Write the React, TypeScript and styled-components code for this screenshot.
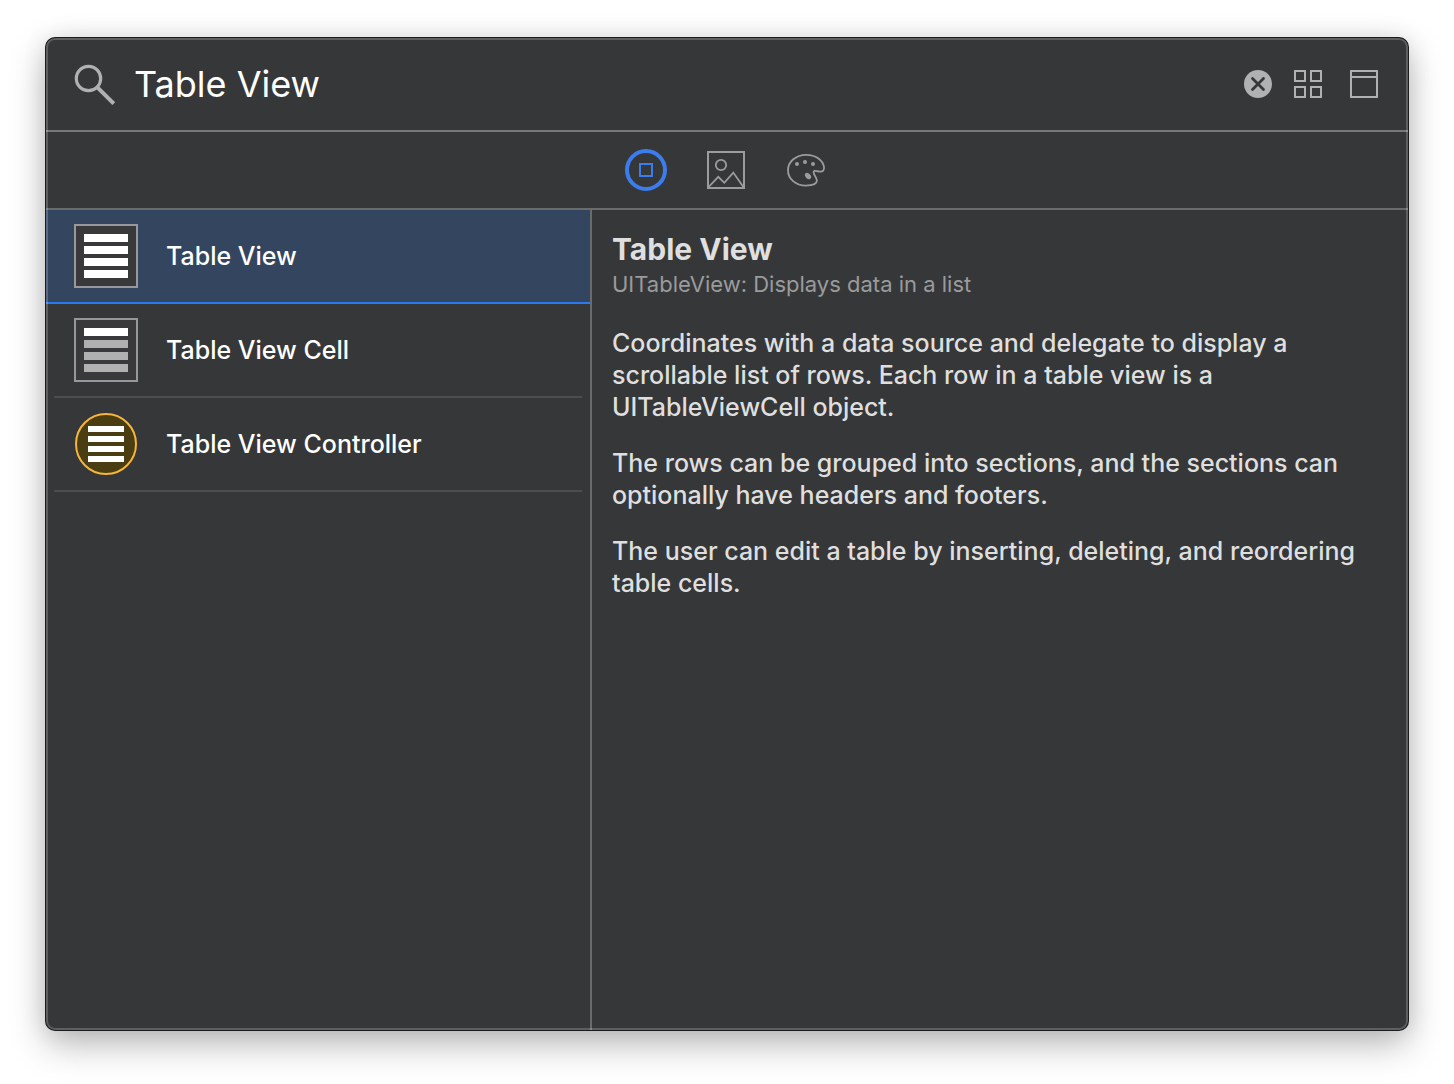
import { useState } from "react";
import styled, { createGlobalStyle } from "styled-components";

const GlobalStyle = createGlobalStyle`
  *, *::before, *::after { box-sizing: border-box; }
  body {
    margin: 0;
    background: #ffffff;
    font-family: Inter, "Liberation Sans", sans-serif;
    -webkit-font-smoothing: antialiased;
  }
  button, input {
    font: inherit;
    color: inherit;
    border: 0;
    margin: 0;
    padding: 0;
    background: none;
  }
  svg { display: block; }
`;

const Desktop = styled.div`
  display: flex;
  min-height: 100vh;
  padding: 38px 46px 54px;
`;

const Window = styled.main`
  position: relative;
  display: flex;
  flex: 1;
  flex-direction: column;
  min-width: 0;
  overflow: clip;
  border-radius: 9px;
  background: #363738;
  color: #ffffff;
  box-shadow:
    0 0 0 1px #1b1c1e,
    0 14px 36px rgba(0, 0, 0, 0.28),
    0 0 24px rgba(0, 0, 0, 0.1);

  &::after {
    content: "";
    position: absolute;
    inset: 0;
    border: 2px solid rgba(255, 255, 255, 0.2);
    border-radius: inherit;
    pointer-events: none;
  }
`;

const SearchBar = styled.header`
  display: flex;
  align-items: center;
  height: 94px;
  padding: 0 30px 0 28px;
  border-bottom: 2px solid #77787a;
  color: #b0b1b3;
`;

const SearchLabel = styled.label`
  display: flex;
  flex: 1;
  align-items: center;
  gap: 18px;
  min-width: 0;
`;

const SearchInput = styled.input`
  flex: 1;
  min-width: 0;
  height: 52px;
  color: #ffffff;
  font-size: 36px;
  outline: none;
`;

const BarButtons = styled.div`
  display: flex;
  align-items: center;
  gap: 28px;
`;

const IconButton = styled.button<{ $tight?: boolean }>`
  width: 28px;
  height: 28px;
  margin-right: ${(p) => (p.$tight ? "-6px" : "0")};
`;

const Tabs = styled.nav`
  display: flex;
  align-items: center;
  justify-content: center;
  gap: 38px;
  height: 78px;
  padding-right: 2px;
  border-bottom: 2px solid #6a6b6c;
`;

const Tab = styled.button<{ $active: boolean }>`
  width: 42px;
  height: 42px;
  color: ${(p) => (p.$active ? "#3c7ded" : "#9b9c9e")};
`;

const Body = styled.div`
  display: flex;
  flex: 1;
`;

const List = styled.ul`
  flex: 0 1 546px;
  margin: 0;
  padding: 0;
  border-right: 2px solid #6a6b6c;
  list-style: none;
`;

const Item = styled.li<{ $selected: boolean }>`
  padding: 0 ${(p) => (p.$selected ? 0 : 8)}px;
  background: ${(p) => (p.$selected ? "#34455f" : "transparent")};
`;

const Row = styled.button<{ $selected: boolean }>`
  display: flex;
  align-items: center;
  gap: 28px;
  width: 100%;
  height: 94px;
  padding-left: ${(p) => (p.$selected ? 28 : 20)}px;
  border-bottom: 2px solid ${(p) => (p.$selected ? "#2a7bf0" : "#4c4d4e")};
  font-size: 25px;
  font-weight: 500;
  text-align: left;
`;

const Detail = styled.article`
  flex: 1;
  min-width: 0;
  padding: 20px;
  color: #dfdfdf;
`;

const Title = styled.h1`
  margin: 0;
  font-size: 30px;
  font-weight: 700;
  line-height: 38px;
`;

const Subtitle = styled.p`
  margin: 0 0 27px;
  color: #9a9b9d;
  font-size: 22px;
  line-height: 32px;
`;

const Paragraph = styled.p`
  margin: 0 0 24px;
  font-size: 25px;
  font-weight: 500;
  line-height: 32px;
`;

const SearchIcon = () => (
  <svg width="42" height="42" viewBox="0 0 42 42" fill="none" stroke="currentColor" aria-hidden="true">
    <circle cx="14.5" cy="15.5" r="12.2" strokeWidth="3.2" />
    <path d="M23.4 24.4 39.8 40.6" strokeWidth="4" />
  </svg>
);

const ClearIcon = () => (
  <svg width="28" height="28" viewBox="0 0 28 28" aria-hidden="true">
    <circle cx="14" cy="14" r="14" fill="currentColor" />
    <path d="M8.5 8.500l11 11M19.500 8.500l-11 11" stroke="#363738" strokeWidth="2.8" strokeLinecap="round" />
  </svg>
);

const GridIcon = () => (
  <svg width="28" height="28" viewBox="0 0 28 28" fill="none" stroke="currentColor" strokeWidth="2" aria-hidden="true">
    <path d="M1 1h10v10H1zM17 1h10v10H17zM1 17h10v10H1zM17 17h10v10H17z" />
  </svg>
);

const WindowIcon = () => (
  <svg width="28" height="28" viewBox="0 0 28 28" fill="none" stroke="currentColor" strokeWidth="2" aria-hidden="true">
    <path d="M1 1h26v26H1zM1 7h26" />
  </svg>
);

const ObjectsIcon = () => (
  <svg width="42" height="42" viewBox="0 0 42 42" fill="none" stroke="currentColor" aria-hidden="true">
    <circle cx="21" cy="21" r="19" strokeWidth="4" />
    <path d="M15 15h12v12H15z" strokeWidth="2" />
  </svg>
);

const MediaIcon = () => (
  <svg width="42" height="42" viewBox="0 0 42 42" fill="none" stroke="currentColor" aria-hidden="true">
    <path d="M3 3h36v36H3z" strokeWidth="2" />
    <circle cx="16" cy="16" r="5.2" strokeWidth="1.8" />
    <path d="M3.6 38 13.3 27.8l6 6 9-10.2L38.4 38" strokeWidth="1.8" />
  </svg>
);

const PaletteIcon = () => (
  <svg width="42" height="42" viewBox="0 0 42 42" fill="none" stroke="currentColor" aria-hidden="true">
    <path
      d="M21.2 5.8C11 5.800 3 12.600 3 21.200s7.600 15.400 17.900 15.400c6.300 0 11-1.800 11-5 0-3-3.300-5.600-3.300-8.300 0-2.500 2.300-1.300 5.200-.8 4.500.7 5.600-1.500 5.200-4.600C37.700 10.800 30.600 5.800 21.200 5.800Z"
      strokeWidth="1.8"
    />
    <g fill="currentColor" stroke="none">
      <circle cx="12" cy="15" r="2" />
      <circle cx="20" cy="13" r="2" />
      <circle cx="28" cy="15" r="2" />
      <ellipse cx="23" cy="27" rx="3.600" ry="2.500" transform="rotate(48 23 27)" />
    </g>
  </svg>
);

const TableIcon = ({ bars }: { bars: string }) => (
  <svg width="64" height="64" viewBox="0 0 64 64" aria-hidden="true">
    <rect x="1" y="1" width="62" height="62" fill="#39393b" stroke="#97989b" strokeWidth="2" />
    <path d="M10 10h44v8H10z" fill="#ffffff" />
    <path d="M10 22h44v8H10zM10 34h44v8H10zM10 46h44v8H10z" fill={bars} />
  </svg>
);

const ControllerIcon = () => (
  <svg width="64" height="64" viewBox="0 0 64 64" aria-hidden="true">
    <circle cx="32" cy="32" r="30" fill="#4a3d12" stroke="#f6b53c" strokeWidth="2" />
    <path d="M14 14h36v6H14zM14 24h36v6H14zM14 34h36v6H14zM14 44h36v6H14z" fill="#ffffff" />
  </svg>
);

const tabs = [
  { name: "Objects", icon: <ObjectsIcon /> },
  { name: "Media", icon: <MediaIcon /> },
  { name: "Colors", icon: <PaletteIcon /> },
];

const items = [
  { name: "Table View", icon: <TableIcon bars="#ffffff" /> },
  { name: "Table View Cell", icon: <TableIcon bars="#b0b0b0" /> },
  { name: "Table View Controller", icon: <ControllerIcon /> },
];

export default function App() {
  const [query, setQuery] = useState("Table View");
  const [tab, setTab] = useState(0);
  const [selected, setSelected] = useState(0);

  return (
    <>
      <GlobalStyle />
      <Desktop>
        <Window>
          <SearchBar>
            <SearchLabel>
              <SearchIcon />
              <SearchInput
                type="text"
                aria-label="Search library"
                value={query}
                onChange={(e) => setQuery(e.target.value)}
              />
            </SearchLabel>
            <BarButtons>
              <IconButton $tight aria-label="Clear" onClick={() => setQuery("")}>
                <ClearIcon />
              </IconButton>
              <IconButton aria-label="Grid view">
                <GridIcon />
              </IconButton>
              <IconButton aria-label="Toggle details">
                <WindowIcon />
              </IconButton>
            </BarButtons>
          </SearchBar>
          <Tabs aria-label="Library">
            {tabs.map((t, i) => (
              <Tab key={t.name} $active={i === tab} aria-label={t.name} aria-pressed={i === tab} onClick={() => setTab(i)}>
                {t.icon}
              </Tab>
            ))}
          </Tabs>
          <Body>
            <List>
              {items.map((item, i) => (
                <Item key={item.name} $selected={i === selected}>
                  <Row $selected={i === selected} onClick={() => setSelected(i)}>
                    {item.icon}
                    <span>{item.name}</span>
                  </Row>
                </Item>
              ))}
            </List>
            <Detail>
              <Title>Table View</Title>
              <Subtitle>UITableView: Displays data in a list</Subtitle>
              <Paragraph>
                Coordinates with a data source and delegate to display a scrollable list of rows. Each row in a table
                view is a UITableViewCell object.
              </Paragraph>
              <Paragraph>
                The rows can be grouped into sections, and the sections can optionally have headers and footers.
              </Paragraph>
              <Paragraph>The user can edit a table by inserting, deleting, and reordering table cells.</Paragraph>
            </Detail>
          </Body>
        </Window>
      </Desktop>
    </>
  );
}
